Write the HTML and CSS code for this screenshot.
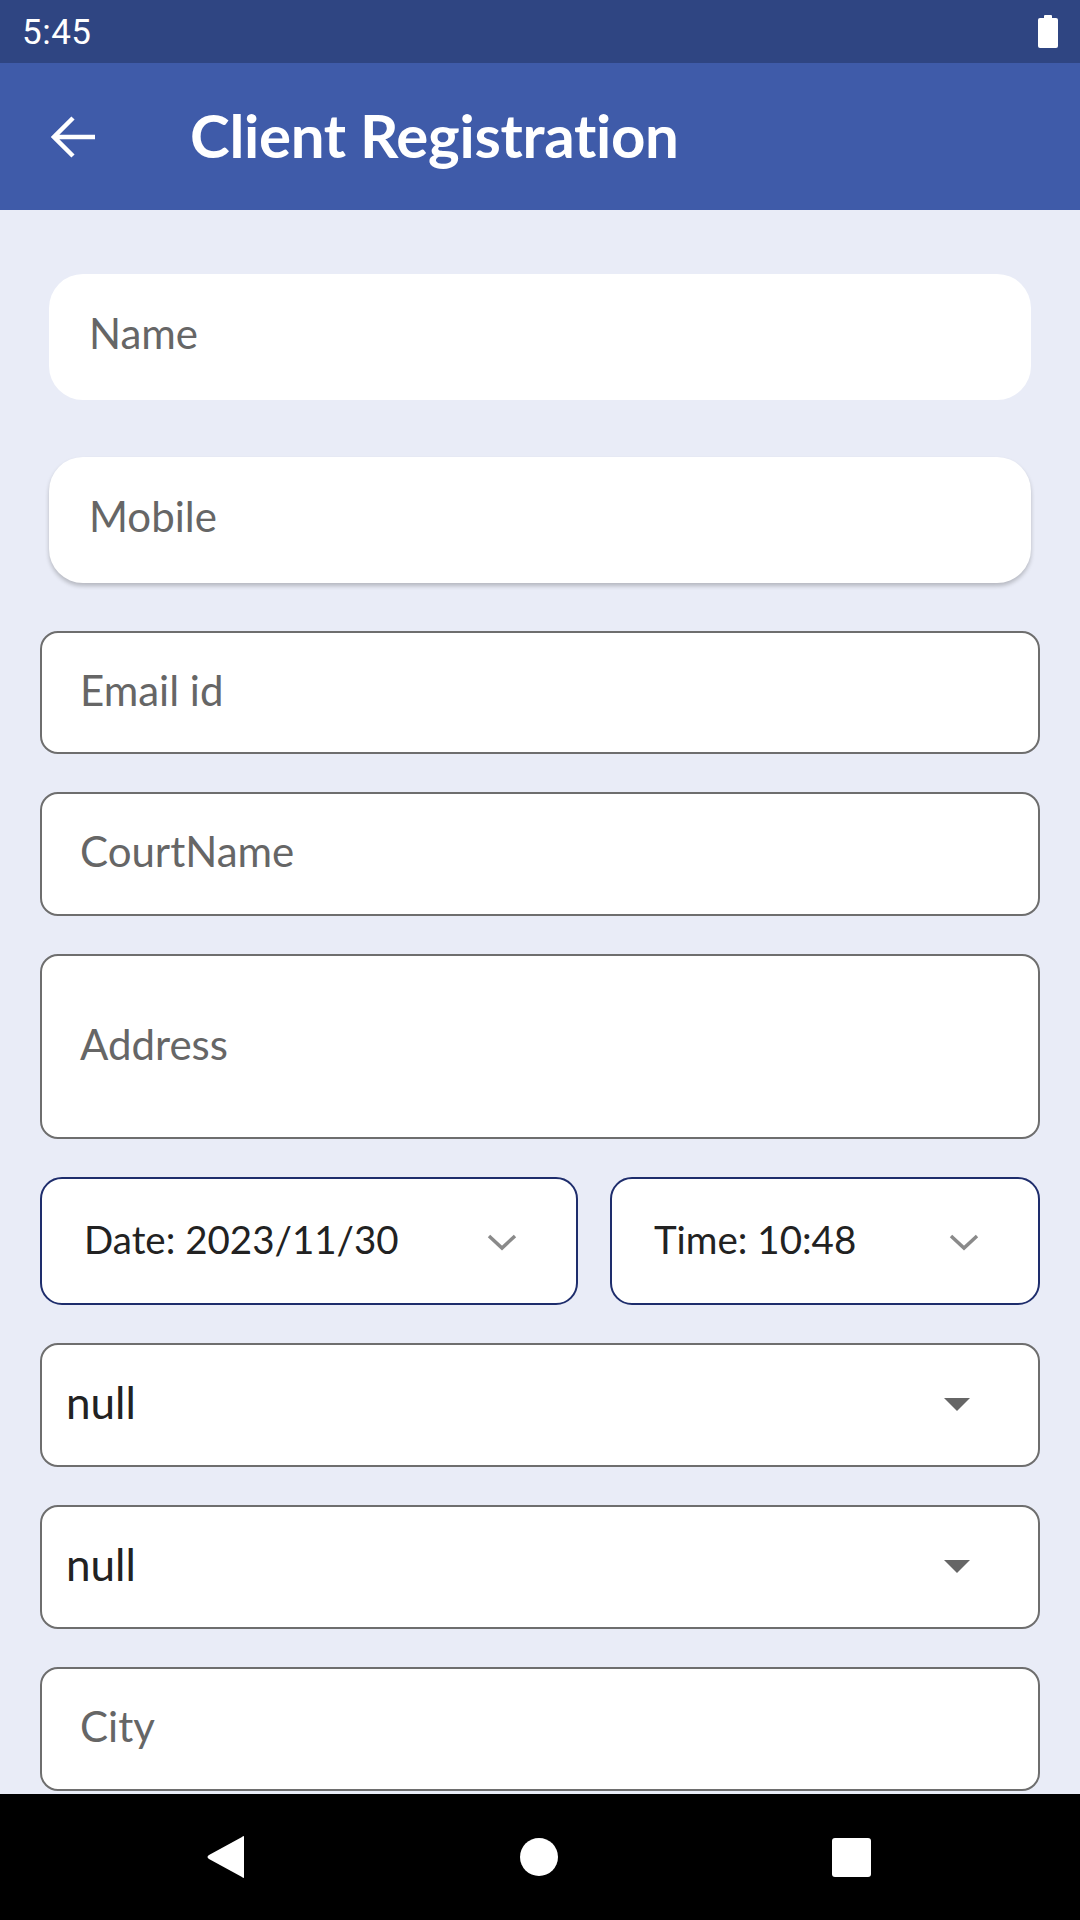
FILE: index.html
```html
<!DOCTYPE html>
<html>
<head>
<meta charset="utf-8">
<link rel="stylesheet" href="styles.css">
</head>
<body>
<div class="screen">
  <div class="status">
    <span class="clock">5:45</span>
    <svg class="battery" width="20" height="33" viewBox="0 0 20 33"><rect x="6" y="0" width="8" height="4" rx="1" fill="#fff"/><rect x="0" y="3" width="20" height="30" rx="2" fill="#fff"/></svg>
  </div>
  <div class="appbar">
    <svg class="back" width="46" height="44" viewBox="0 0 46 44"><path d="M44 22 H4 M22 3 L3 22 L22 41" fill="none" stroke="#fff" stroke-width="4.5" stroke-linejoin="miter"/></svg>
    <span class="title">Client Registration</span>
  </div>
  <div class="content">
    <div class="pill">Name</div>
    <div class="pill pill-shadow pill-mobile">Mobile</div>
    <div class="field field-email">Email id</div>
    <div class="field">CourtName</div>
    <div class="field field-address">Address</div>
    <div class="row">
      <div class="picker picker-date">
        <span>Date: 2023/11/30</span>
        <svg class="chev" width="32" height="20" viewBox="0 0 32 20"><path d="M3 4 L16 16 L29 4" fill="none" stroke="#8a8a8a" stroke-width="3.5"/></svg>
      </div>
      <div class="picker picker-time">
        <span>Time: 10:48</span>
        <svg class="chev" width="32" height="20" viewBox="0 0 32 20"><path d="M3 4 L16 16 L29 4" fill="none" stroke="#8a8a8a" stroke-width="3.5"/></svg>
      </div>
    </div>
    <div class="field select"><span>null</span><span class="tri"></span></div>
    <div class="field select"><span>null</span><span class="tri"></span></div>
    <div class="field">City</div>
  </div>
  <div class="navbar">
    <svg width="40" height="44" viewBox="0 0 40 44"><path d="M38 2 L38 42 Q38 44 36 42 L3 24 Q0 22 3 20 L36 2 Q38 0 38 2 Z" fill="#fff"/></svg>
    <span class="home"></span>
    <span class="recent"></span>
  </div>
</div>
</body>
</html>
```
FILE: styles.css
```css
html, body {
  margin: 0;
  padding: 0;
}
body {
  width: 1080px;
  height: 1920px;
  overflow: hidden;
  font-family: Lato, "Noto Sans", sans-serif;
  background: #e9ecf7;
}
.screen {
  display: flex;
  flex-direction: column;
  height: 1920px;
}
.status {
  height: 63px;
  background: #2f4582;
  display: flex;
  align-items: center;
  justify-content: space-between;
  padding: 0 22px 0 22px;
  color: #fff;
  flex: none;
}
.clock {
  font-family: Roboto, sans-serif;
  font-size: 35px;
  letter-spacing: 0.5px;
  padding-top: 2px;
}
.appbar {
  height: 147px;
  background: #3f5ba9;
  display: flex;
  align-items: center;
  padding-left: 51px;
  flex: none;
}
.back {
  margin-right: 93px;
}
.title {
  color: #fff;
  font-weight: 700;
  font-size: 60px;
  letter-spacing: -0.3px;
  padding-bottom: 4px;
}
.content {
  flex: 1;
  overflow: hidden;
  padding: 64px 40px 0 40px;
  display: flex;
  flex-direction: column;
}
.pill {
  box-sizing: border-box;
  margin: 0 9px;
  height: 126px;
  background: #fff;
  border-radius: 34px;
  display: flex;
  align-items: center;
  padding-left: 40px;
  padding-bottom: 8px;
  font-size: 42px;
  color: #666;
  flex: none;
}
.pill-mobile {
  margin-top: 57px;
}
.pill-shadow {
  box-shadow: 0 3px 4px rgba(0,0,0,0.22);
}
.field {
  box-sizing: border-box;
  height: 124px;
  background: #fff;
  border: 2px solid #6e6e6e;
  border-radius: 18px;
  display: flex;
  align-items: center;
  padding-left: 38px;
  padding-bottom: 6px;
  font-size: 42px;
  color: #666;
  margin-top: 38px;
  flex: none;
}
.field-email {
  margin-top: 48px;
  height: 123px;
}
.field-address {
  height: 185px;
}
.row {
  display: flex;
  gap: 32px;
  margin-top: 38px;
  flex: none;
}
.picker {
  box-sizing: border-box;
  height: 128px;
  background: #fff;
  border: 2px solid #1e2d6c;
  border-radius: 22px;
  display: flex;
  align-items: center;
  justify-content: space-between;
  font-size: 38.5px;
  color: #222;
  padding-bottom: 4px;
}
.picker-date {
  width: 538px;
  padding-left: 42px;
  padding-right: 58px;
}
.picker-time {
  width: 430px;
  padding-left: 42px;
  padding-right: 58px;
}
.chev {
  margin-top: 6px;
}
.select {
  color: #222;
  padding-left: 24px;
  padding-right: 68px;
  justify-content: space-between;
  font-size: 44px;
}
.tri {
  width: 0;
  height: 0;
  border-left: 13px solid transparent;
  border-right: 13px solid transparent;
  border-top: 13px solid #666;
  margin-top: 4px;
}
.navbar {
  height: 126px;
  background: #000;
  display: flex;
  align-items: center;
  justify-content: space-between;
  padding: 0 209px 0 206px;
  flex: none;
}
.home {
  width: 38px;
  height: 38px;
  border-radius: 50%;
  background: #fff;
}
.recent {
  width: 39px;
  height: 39px;
  border-radius: 3px;
  background: #fff;
}
```
